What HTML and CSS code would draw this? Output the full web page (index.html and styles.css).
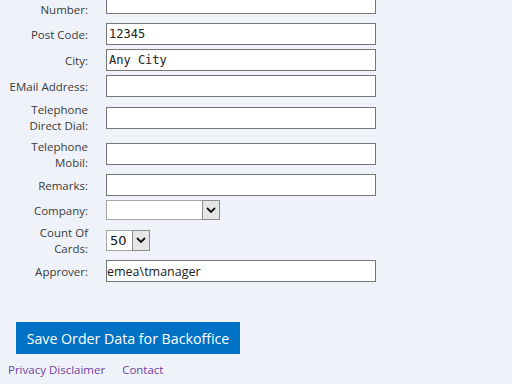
FILE: index.html
```html
<!DOCTYPE html>
<html lang="en">
<head>
  <meta charset="UTF-8">
  <title>Order Cards</title>
  <link rel="stylesheet" href="styles.css">
</head>
<body>

  <div class="pagina">
    <div class="formulario">
      <label class="etiqueta etiqueta-primera">House<br>Number:</label>
      <div class="campo"><input class="caja" type="text"></div>

      <label class="etiqueta">Post Code:</label>
      <div class="campo"><input class="caja" type="text" value="12345"></div>

      <label class="etiqueta">City:</label>
      <div class="campo"><input class="caja" type="text" value="Any City"></div>

      <label class="etiqueta">EMail Address:</label>
      <div class="campo"><input class="caja" type="text"></div>

      <label class="etiqueta etiqueta-alta">Telephone<br>Direct Dial:</label>
      <div class="campo"><input class="caja" type="text"></div>

      <label class="etiqueta">Telephone<br>Mobil:</label>
      <div class="campo"><input class="caja" type="text"></div>

      <label class="etiqueta">Remarks:</label>
      <div class="campo"><input class="caja" type="text"></div>

      <label class="etiqueta">Company:</label>
      <div class="campo">
        <div class="combo combo-ancho">
          <select><option></option></select>
          <span class="flecha"><svg width="10" height="6" viewBox="0 0 10 6"><path d="M1 1 L5 5 L9 1" fill="none" stroke="#111" stroke-width="1.8"/></svg></span>
        </div>
      </div>

      <label class="etiqueta">Count Of<br>Cards:</label>
      <div class="campo">
        <div class="combo combo-corto">
          <select><option>50</option><option>100</option></select>
          <span class="flecha"><svg width="10" height="6" viewBox="0 0 10 6"><path d="M1 1 L5 5 L9 1" fill="none" stroke="#111" stroke-width="1.8"/></svg></span>
        </div>
      </div>

      <label class="etiqueta">Approver:</label>
      <div class="campo"><input class="caja caja-persona" type="text" value="emea\tmanager"></div>
    </div>

    <button class="guardar">Save Order Data for Backoffice</button>

    <div class="pie">
      <a href="#">Privacy Disclaimer</a>
      <a href="#">Contact</a>
    </div>
  </div>

</body>
</html>
```

FILE: styles.css
```css
:root {
  --color-fondo: #eff3f9;
  --color-azul: #0072c6;
  --color-texto: #3a3a3a;
  --color-borde: #767676;
  --color-enlace: #6f3fa0;
}

body {
  margin: 0;
  background: var(--color-fondo);
  font-family: 'Open Sans', 'Segoe UI', sans-serif;
  color: var(--color-texto);
  overflow: hidden;
}

/* la pagina esta desplazada, la primera fila queda cortada */
.pagina {
  margin-top: -15px;
}

/* FORMULARIO */
.formulario {
  display: grid;
  grid-template-columns: 88px 270px;
  column-gap: 18px;
  align-items: center;
}

.etiqueta {
  text-align: right;
  font-size: 11.5px;
  line-height: 16px;
  padding: 3px 0 1px;
  white-space: nowrap;
}

.etiqueta-primera {
  padding: 1px 0 3px;
}

.etiqueta-alta {
  padding-bottom: 2px;
}

.campo {
  padding: 2px 0;
  display: flex;
  align-items: center;
}

.caja {
  box-sizing: border-box;
  width: 270px;
  height: 22px;
  margin: 0;
  padding: 0 2px;
  border: 1px solid var(--color-borde);
  background: white;
  font-family: 'DejaVu Sans Mono', monospace;
  font-size: 12px;
  color: #222;
  outline: none;
}

.caja-persona {
  padding: 0;
  font-family: 'Open Sans', sans-serif;
  font-size: 12.5px;
}

/* LISTAS */
.combo {
  box-sizing: border-box;
  display: flex;
  height: 20px;
  border: 1px solid #a6a6a6;
  background: white;
}

.combo-ancho {
  width: 114px;
}

.combo-corto {
  width: 44px;
  height: 21px;
}

.combo select {
  flex: 1;
  min-width: 0;
  appearance: none;
  border: none;
  background: white;
  margin: 0;
  padding: 0 0 0 3px;
  font-family: 'DejaVu Sans', sans-serif;
  font-size: 13px;
  color: #111;
  outline: none;
}

.flecha {
  box-sizing: border-box;
  width: 18px;
  margin: -1px -1px -1px 0;
  border: 1px solid #8c8c8c;
  background: #e6e6e6;
  display: flex;
  align-items: center;
  justify-content: center;
}

/* BOTON */
.guardar {
  display: block;
  margin: 38px 0 0 16px;
  width: 224px;
  height: 32px;
  padding: 0;
  border: none;
  background: var(--color-azul);
  color: white;
  font-family: 'Open Sans', 'Segoe UI', sans-serif;
  font-size: 14.2px;
  cursor: pointer;
}

/* Pie */
.pie {
  margin: 8px 0 0 8px;
  display: flex;
  gap: 17px;
  font-size: 11.5px;
  line-height: 16px;
}

.pie a {
  color: var(--color-enlace);
  text-decoration: none;
}
```
